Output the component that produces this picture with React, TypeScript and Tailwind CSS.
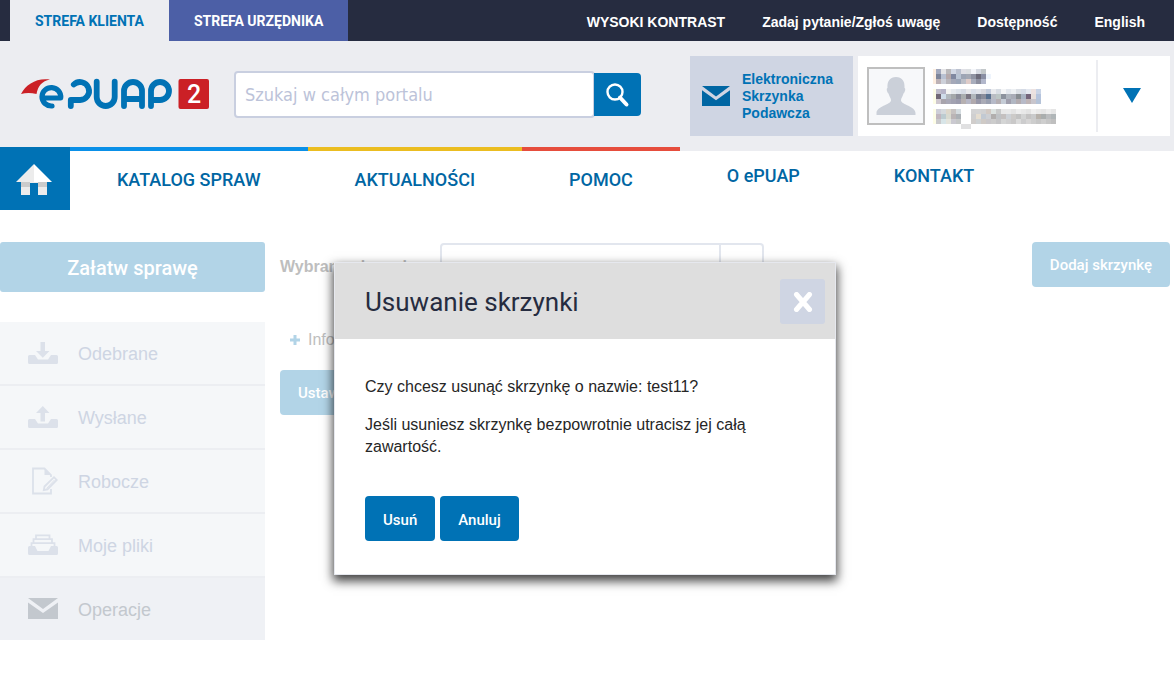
import React from "react";

const arial = "font-['Liberation_Sans',Arial,sans-serif]";
const action = "h-[45px] rounded px-[18px] pt-0.5 font-[Roboto,sans-serif] text-[15px] font-medium text-white";

const nameMosaic = [
  {
    y: 5,
    rows: [
      ["#a3a9bd", "#e4e4e6", "#bab9bb", "#d3d9e5", "#bcc2d0", "#e0e0e6", "#dcdfe2", "#f4f6fa", "#d6dae2", "#c3c8ca"],
      ["#7f8599", "#b8c1d2", "#b5a9ab", "#8088a0", "#b9c4d3", "#9da5b5", "#a4a9b5", "#8f93a2", "#6c6b7a", "#8a8fa4"],
      ["#bdb2b6", "#cdd0d9", "#b8b6bc", "#a4a8b8", "#9ca6b8", "#bcbfc8", "#dfccc9", "#a8adbc", "#8d90a0", "#b2b7cb"],
    ],
  },
  {
    y: 25,
    rows: [
      ["#c0bdcb", "#b6b4c8", "#f3f3f2", "#e6eaee", "#dde3ea", "#d6dbe4", "#e6e7ea", "#d9dfe9", "#e0e3ea", "#d8d8de", "#c3cbdb", "#e9ebee", "#d8dde4", "#f4f5f6", "#e3e7ed", "#edf0f3", "#dbdfe5", "#d5dbe6", "#e4e8f0", "#ece2e1", "#c9d4e6"],
      ["#716876", "#cfdcea", "#b1b7bd", "#a4a8aa", "#8b8d99", "#a9adae", "#7b7682", "#b0b6bb", "#797f8f", "#8a8d9b", "#58708f", "#b9bdc4", "#bcc6c5", "#8c929d", "#aeb4bd", "#a9acb7", "#878c91", "#a8b2c1", "#74647a", "#e7dfdc", "#b5c4dd"],
      ["#cfc8cf", "#a8a4ac", "#a9a8b6", "#a2a2b1", "#9c9cad", "#b6b0b1", "#b7b8c7", "#b0a9ad", "#9797a8", "#aaabb6", "#9ba0b0", "#b6bac8", "#b5afb3", "#c5ccd6", "#a09fad", "#b1b7c3", "#b3acb0", "#b7bac8", "#bfb5b7", "#c8c5cc", "#b5c3d8"],
    ],
  },
  {
    y: 45,
    rows: [
      ["#ceced8", "#d6dadd", "#ddd7ca", "#c7c3c2", "#d5dce0", "#ffffff", "#ffffff", "#d3d3d4", "#d4d4d5", "#d1d1d2", "#d2c9c3", "#dce2e0", "#c9caca", "#e8e8e8", "#e9e9e9", "#e3e3e3", "#ededed", "#e8e8e8", "#e3e3e3", "#efefef", "#e9e9e9", "#e5e5e5", "#ededed", "#e5e5e5"],
      ["#c1b7bf", "#bccbd0", "#d8dad0", "#bab4b5", "#abb0b5", "#ffffff", "#ffffff", "#cfcfd0", "#e5ddd0", "#c2c9d2", "#cdcfd3", "#b1aead", "#bfc2c5", "#c4c0bf", "#cdd1d6", "#cccac8", "#c2c2c2", "#d2d3d3", "#c4c3c3", "#c9cacb", "#b6b1ab", "#aaaeae", "#bbbdbf", "#b0b6b8"],
      ["#cacacc", "#d8e5e8", "#e4e4dc", "#cac9d0", "#c5c7c7", "#ffffff", "#ffffff", "#d0cdcb", "#ced2d4", "#cfcac6", "#c9c7ca", "#cccccc", "#c4c4c6", "#d4d5d5", "#cfcfd0", "#c9c8c8", "#dbdbdb", "#cccccd", "#d6d5d5", "#cdcdcd", "#c6c6c6", "#cecece", "#c6c6c6", "#bfbfbf"],
      ["", "", "", "", "", "#e0e0e1", "#e0e0e1"],
    ],
  },
];

function NameMosaic() {
  return (
    <svg width="124" height="68" viewBox="0 -2 124 68" role="img" aria-label="Użytkownik" shapeRendering="crispEdges">
      <rect x="0" y="5" width="3" height="15" fill="#fdeee0" />
      <rect x="0" y="25" width="3" height="15" fill="#fdfde6" />
      <rect x="0" y="45" width="3" height="15" fill="#fdfde6" />
      <rect x="53" y="10" width="5" height="5" fill="#eef4fc" />
      {nameMosaic.map((line) =>
        line.rows.map((row, r) =>
          row.map((c, i) =>
            c ? <rect key={`${line.y}-${r}-${i}`} x={3 + i * 5} y={line.y + r * 5} width="5" height="5" fill={c} /> : null,
          ),
        ),
      )}
    </svg>
  );
}

function Logo() {
  return (
    <svg width="190" height="32" viewBox="20 78 190 32" role="img" aria-label="ePUAP2">
      <path d="M21 94C26 84 37 77.500 50 79.500C42 81 38 86 36.500 94C31 92.800 26 92.800 21 94Z" fill="#cb2026" />
      <g fill="none" stroke="#0072b5" strokeWidth="5.800" strokeLinecap="round" strokeLinejoin="round">
        <path d="M42.500 98H60.700A9.400 9.200 0 1 0 52 106" strokeWidth="5.200" />
        <path d="M73.800 84.500a9 9 0 1 1 6 15.500h-9v6" />
        <path d="M96.700 81.700V97a9 9 0 0 0 18 0V81.700" />
        <path d="M124 106V91a9 9 0 0 1 18 0v15M124 99h18" />
        <path d="M151 106V91a9 9 0 1 1 9 9h-9" />
      </g>
      <rect x="178.500" y="79" width="30.500" height="30" rx="2" fill="#cb2026" />
      <text x="194" y="103" textAnchor="middle" fill="#fff" fontFamily="Roboto, sans-serif" fontWeight="500" fontSize="25">2</text>
    </svg>
  );
}

function Envelope({ className }: { className: string }) {
  return (
    <svg viewBox="0 0 30 21" className={className} preserveAspectRatio="none" aria-hidden="true">
      <path d="M0 0H30L15 11ZM0 4.500L15 15L30 4.500V21H0Z" fill="currentColor" />
    </svg>
  );
}

function TrayIcon({ up }: { up?: boolean }) {
  return (
    <svg width="30" height="22" viewBox="0 0 30 22" fill="currentColor" aria-hidden="true">
      <path d="M0 14.500Q0 13 1.500 13H7L10 17.500H20L23 13H28.500Q30 13 30 14.500V20.500Q30 22 28.500 22H1.500Q0 22 0 20.500Z" />
      {up ? <path d="M12.500 15.500V7H8L14.800 0L21.500 7H17V15.500Z" /> : <path d="M12.500 0H17V9H21.500L14.800 15.800L8 9H12.500Z" />}
    </svg>
  );
}

function DraftIcon() {
  return (
    <svg width="30" height="28" viewBox="0 0 30 28" fill="none" stroke="currentColor" strokeWidth="1.800" aria-hidden="true">
      <path d="M23 10V8L16.500 1.500H5V26.500H23V22" />
      <path d="M16.500 1.500V8H23Z" fill="currentColor" stroke="none" />
      <path d="M16.500 19.500L26 10.200L28.800 13L19.500 22.300L15.800 23Z" />
      <path d="M18.500 21.500L26.500 13" strokeWidth="1" />
    </svg>
  );
}

function FilesIcon() {
  return (
    <svg width="30" height="22" viewBox="0 0 30 22" fill="none" stroke="currentColor" strokeWidth="1.800" aria-hidden="true">
      <path d="M8 5V1.300H21.500V5M5.500 9V5.200H24V9M3.500 13V9.200H26.500V13" />
      <path d="M0 13.500Q0 12 1.500 12H7L9.500 17H20.500L23 12H28.500Q30 12 30 13.500V19.500Q30 21 28.500 21H1.500Q0 21 0 19.500Z" fill="currentColor" stroke="none" />
    </svg>
  );
}

const sideItems = [
  { label: "Odebrane", icon: <TrayIcon /> },
  { label: "Wysłane", icon: <TrayIcon up /> },
  { label: "Robocze", icon: <DraftIcon /> },
  { label: "Moje pliki", icon: <FilesIcon /> },
];

const navItems = [
  { label: "KATALOG SPRAW", border: "border-t-4 border-[#0a90e8]" },
  { label: "AKTUALNOŚCI", border: "border-t-4 border-[#ebbd21]" },
  { label: "POMOC", border: "border-t-4 border-[#e64d3d]" },
  { label: "O ePUAP", border: "" },
  { label: "KONTAKT", border: "" },
];

function TopBar() {
  return (
    <div className="flex h-[41px] justify-between bg-[#262c40] pl-2.5 pr-[29px]">
      <nav aria-label="Strefy" className="flex font-[Roboto,sans-serif] text-sm font-bold">
        <a href="#klient" className="flex items-center bg-[#ecedf1] px-[25px] text-[#0072b5]">STREFA KLIENTA</a>
        <a href="#urzednik" className="flex items-center bg-[#4c5fa6] px-[25px] text-white">STREFA URZĘDNIKA</a>
      </nav>
      <nav aria-label="Narzędzia" className={`flex items-center gap-[37px] pt-0.5 text-sm font-bold text-white ${arial}`}>
        <a href="#kontrast">WYSOKI KONTRAST</a>
        <a href="#pytanie">Zadaj pytanie/Zgłoś uwagę</a>
        <a href="#dostepnosc">Dostępność</a>
        <a href="#en">English</a>
      </nav>
    </div>
  );
}

function Header() {
  return (
    <header className="flex h-[110px] items-start bg-[#ecedf1] pr-1 pt-[15px]">
      <a href="#start" className="ml-5 mt-[22px]"><Logo /></a>
      <form role="search" className="ml-6 mt-[15px] flex items-center" onSubmit={(e) => e.preventDefault()}>
        <input
          type="search"
          aria-label="Szukaj w całym portalu"
          placeholder="Szukaj w całym portalu"
          className="h-[47px] w-[361px] rounded border-2 border-[#c9cfe0] bg-white px-[9px] font-['DejaVu_Sans_Condensed','DejaVu_Sans',sans-serif] text-lg outline-none placeholder:text-[#bcc3d9]"
        />
        <button type="submit" aria-label="Szukaj" className="-ml-px flex h-[43px] w-[47px] items-center justify-center rounded-r bg-[#0072b5]">
          <svg width="26" height="26" viewBox="0 0 26 26" fill="none" stroke="#fff" aria-hidden="true">
            <circle cx="10" cy="10" r="7.500" strokeWidth="2.400" />
            <path d="M15 15.500L21.500 22.500" strokeWidth="4" strokeLinecap="round" />
          </svg>
        </button>
      </form>
      <a href="#skrzynka" className={`ml-auto flex h-20 w-[163px] items-center gap-3 bg-[#cfd5e3] pl-3 text-sm leading-[17px] font-bold text-[#0072b5] ${arial}`}>
        <Envelope className="h-5 w-7 shrink-0 text-[#0066a3]" />
        <span>Elektroniczna Skrzynka Podawcza</span>
      </a>
      <div className="ml-[5px] flex h-20 w-[312px] items-center bg-white pl-[9px]">
        <span className="flex h-[58px] w-[58px] items-center justify-center border-2 border-[#bfbfbf] bg-[#f7f8fa]">
          <svg width="40" height="38" viewBox="0 0 40 38" fill="#cbd0d9" aria-hidden="true">
            <path d="M20 0C26 0 29 4 28.500 11C30 11 29 15.500 27.500 16.500C26.500 20 25 21 25 23.500C25.500 28 39.500 29 39.500 36V38H.5V36C.5 29 14.500 28 15 23.500C15 21 13.500 20 12.500 16.500C11 15.500 10 11 11.500 11C11 4 14 0 20 0Z" />
          </svg>
        </span>
        <span className="ml-2"><NameMosaic /></span>
        <button type="button" aria-label="Menu użytkownika" className="ml-auto flex h-[72px] w-[74px] items-center justify-center border-l-2 border-[#ecedf1] pr-1 pb-0.5">
          <svg width="18" height="15" viewBox="0 0 18 15" aria-hidden="true"><path d="M0 0H18L9 15Z" fill="#0072b5" /></svg>
        </button>
      </div>
    </header>
  );
}

function MainNav() {
  return (
    <nav aria-label="Główna" className="-mt-1 flex h-[63px] font-[Roboto,sans-serif] text-lg font-medium text-[#0066a3]">
      <a href="#start" aria-label="Strona główna" className="flex w-[70px] items-center justify-center bg-[#0072b5] pt-0.5 pr-[3px]">
        <svg width="36" height="32" viewBox="0 0 36 32" aria-hidden="true">
          <path d="M5 18H31V31H22V19H14V31H5Z" fill="#ececec" />
          <path d="M5 18H14V23H5ZM22 18H31V23H22Z" fill="#cbcbcb" />
          <path d="M18 0L0 18H18Z" fill="#ececec" />
          <path d="M18 0L36 18H18Z" fill="#fff" />
        </svg>
      </a>
      {navItems.map((n) => (
        <a key={n.label} href={`#${n.label.toLowerCase().replace(" ", "-")}`} className={`h-full px-[47px] pt-[15px] ${n.border}`}>
          {n.label}
        </a>
      ))}
    </nav>
  );
}

function Dialog() {
  return (
    <div className="absolute inset-x-0 top-[262px] flex justify-center pr-1">
      <section role="dialog" aria-labelledby="dialog-title" className="w-[502px] border border-[#e6e8ee] bg-white shadow-[0_5px_10px_1px_rgba(0,0,0,0.75)]">
        <div className="flex items-center justify-between bg-[#dedede] pt-4 pr-2.5 pb-[15px] pl-[30px]">
          <h2 id="dialog-title" className="font-[Roboto,sans-serif] text-[26px] leading-[44px] text-[#262c40]">Usuwanie skrzynki</h2>
          <button type="button" aria-label="Zamknij" className="flex size-[45px] items-center justify-center rounded-[3px] bg-[#cfd5e3]">
            <svg width="20" height="20" viewBox="0 0 20 20" aria-hidden="true">
              <path d="M3.500 2.500L16.500 17.500M16.500 2.500L3.500 17.500" stroke="#fff" strokeWidth="5" strokeLinecap="round" />
            </svg>
          </button>
        </div>
        <div className={`px-[30px] pt-[37px] pb-[33px] text-base leading-[22px] text-[#262626] ${arial}`}>
          <p>Czy chcesz usunąć skrzynkę o nazwie: test11?</p>
          <p className="mt-4">Jeśli usuniesz skrzynkę bezpowrotnie utracisz jej całą zawartość.</p>
          <div className="mt-[38px] flex gap-[5px]">
            <button type="button" className={`bg-[#0072b5] ${action}`}>Usuń</button>
            <button type="button" className={`bg-[#0072b5] ${action}`}>Anuluj</button>
          </div>
        </div>
      </section>
    </div>
  );
}

export default function App() {
  return (
    <div className="relative min-h-screen bg-white">
      <TopBar />
      <Header />
      <MainNav />
      <main className="mt-8 flex items-start pr-1">
        <aside className="w-[265px] shrink-0">
          <button type="button" className="h-[50px] w-full rounded-[3px] bg-[#b2d4e7] pt-0.5 font-[Roboto,sans-serif] text-xl font-medium text-white">
            Załatw sprawę
          </button>
          <ul className={`mt-[30px] text-lg ${arial}`}>
            {sideItems.map((s) => (
              <li key={s.label} className="border-b-2 border-[#eceef2] bg-[#f5f7f9]">
                <a href="#skrzynka" className="flex h-[62px] items-center gap-5 pl-7 text-[#ced5e3]">
                  <span className="text-[#dce1ea]">{s.icon}</span>
                  <span className="pt-0.5">{s.label}</span>
                </a>
              </li>
            ))}
            <li className="bg-[#eff1f5]">
              <a href="#operacje" aria-current="page" className="flex h-[62px] items-center gap-5 pb-0.5 pl-7 text-[#c3c8ce]">
                <Envelope className="h-[21px] w-[30px]" />
                <span className="pt-1">Operacje</span>
              </a>
            </li>
          </ul>
        </aside>
        <div className="ml-[15px] grow">
          <div className="flex items-start">
            <label htmlFor="box" className={`w-40 pt-[13px] text-base font-bold text-[#bebebe] ${arial}`}>Wybrana skrzynka</label>
            <div className="mt-px flex h-[45px] w-[324px] rounded border-2 border-[#e2e6ee]">
              <select id="box" className="grow appearance-none border-r-2 border-[#e2e6ee]" />
              <span className="w-[41px]" />
            </div>
            <button type="button" className={`ml-auto bg-[#b2d4e7] ${action}`}>Dodaj skrzynkę</button>
          </div>
          <button type="button" className={`mt-10 flex items-center gap-2 pl-2.5 text-base text-[#bebebe] ${arial}`}>
            <svg width="10" height="10" viewBox="0 0 10 10" aria-hidden="true"><path d="M3.500 0H6.500V3.500H10V6.500H6.500V10H3.500V6.500H0V3.500H3.500Z" fill="#b2d4e7" /></svg>
            Informacje
          </button>
          <button type="button" className={`mt-[18px] bg-[#b2d4e7] ${action}`}>Ustaw</button>
        </div>
      </main>
      <Dialog />
    </div>
  );
}
